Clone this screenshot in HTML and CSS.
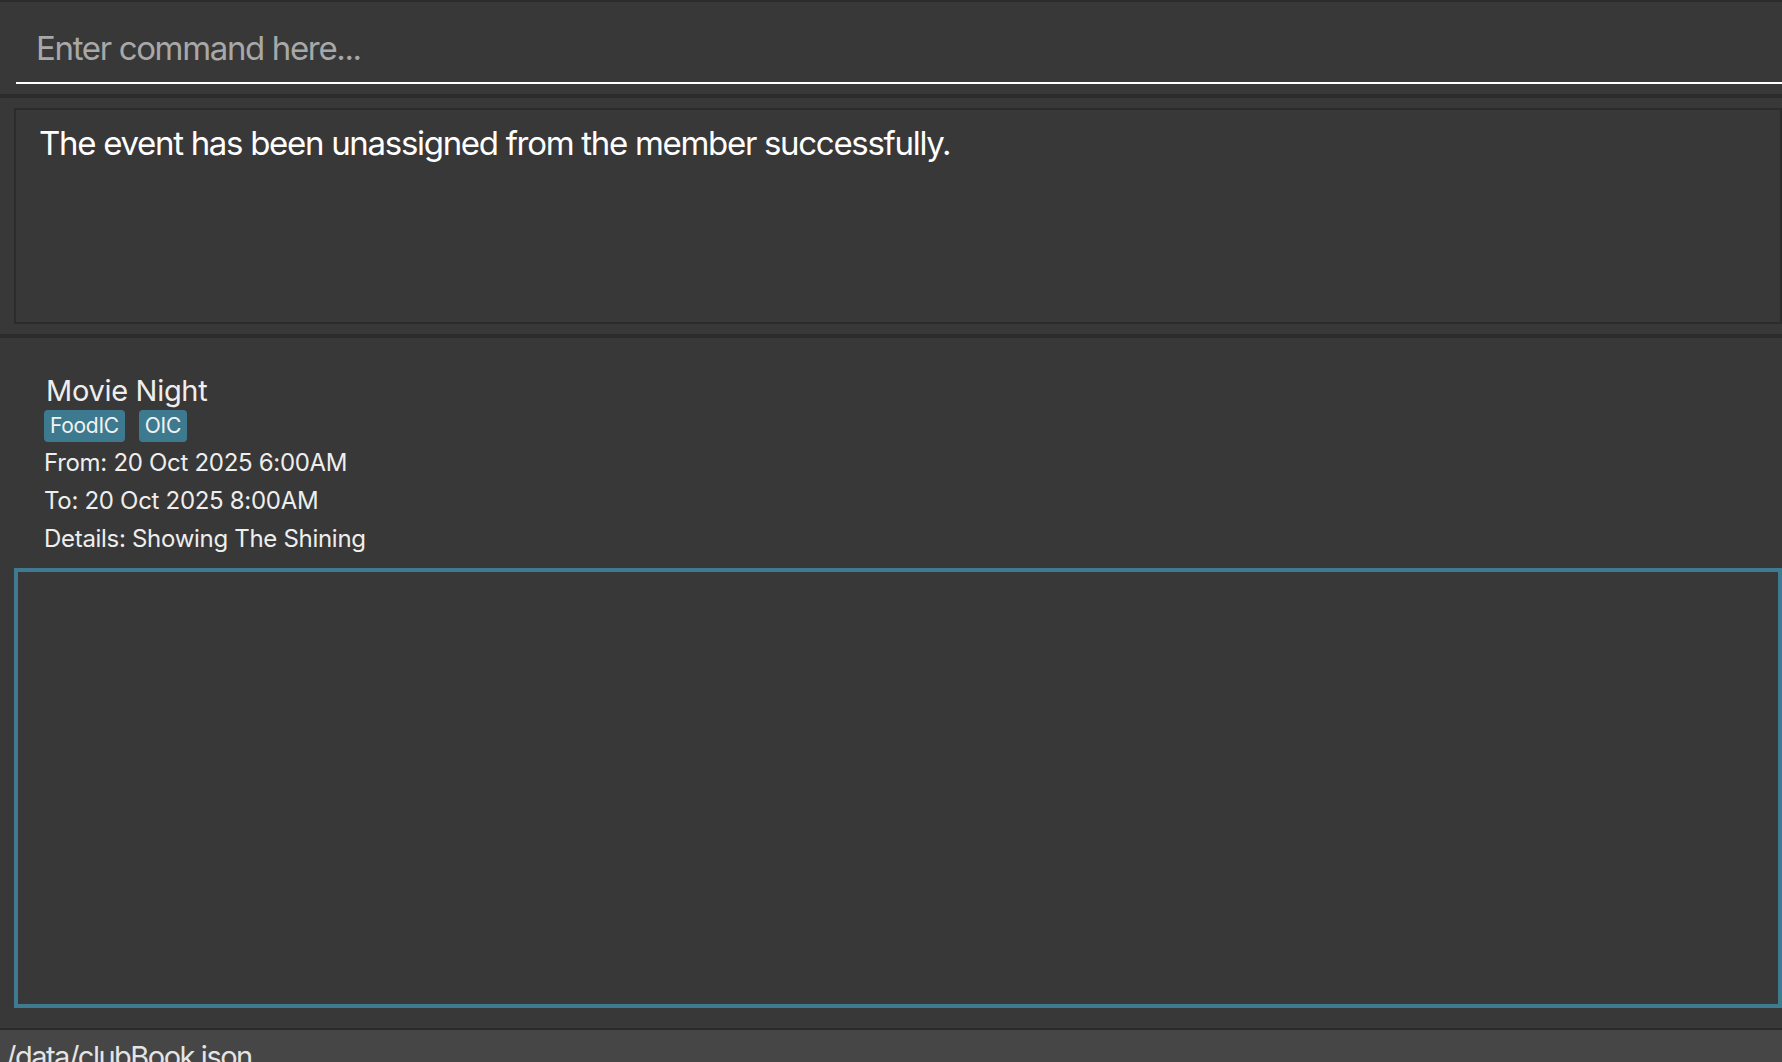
FILE: index.html
```html
<!DOCTYPE html>
<html lang="en">
<head>
<meta charset="utf-8">
<title>ClubBook</title>
<link rel="stylesheet" href="styles.css">
</head>
<body>
<div class="app">
  <div class="command-pane">
    <div class="command-field">
      <span class="placeholder">Enter command here...</span>
    </div>
  </div>
  <div class="divider"></div>
  <div class="result-pane">
    <div class="result-box">
      <p class="result-text">The event has been unassigned from the member successfully.</p>
    </div>
  </div>
  <div class="divider"></div>
  <div class="event-card">
    <div class="event-name">Movie Night</div>
    <div class="tags">
      <span class="tag">FoodIC</span>
      <span class="tag">OIC</span>
    </div>
    <div class="event-line">From: 20 Oct 2025 6:00AM</div>
    <div class="event-line">To: 20 Oct 2025 8:00AM</div>
    <div class="event-line">Details: Showing The Shining</div>
  </div>
  <div class="list-pane">
    <div class="list-box"></div>
  </div>
  <div class="status-bar">/data/clubBook.json</div>
</div>
</body>
</html>
```

FILE: styles.css
```css
html, body {
  margin: 0;
  padding: 0;
  height: 100%;
  overflow: hidden;
  background: #383838;
  font-family: Inter, "Liberation Sans", sans-serif;
}

.app {
  display: flex;
  flex-direction: column;
  height: 1062px;
  border-top: 2px solid #2b2b2b;
  box-sizing: border-box;
  overflow: hidden;
}

.command-pane {
  flex: none;
  height: 92px;
  padding-left: 16px;
  box-sizing: border-box;
}

.command-field {
  height: 80px;
  border-bottom: 2px solid #ffffff;
  padding-left: 20px;
  display: flex;
  align-items: flex-start;
}

.placeholder {
  color: #a8a8a8;
  font-size: 33px;
  letter-spacing: -1.35px;
  line-height: 40px;
  margin-top: 26px;
}

.divider {
  height: 4px;
  background: #2b2b2b;
  flex: none;
}

.result-pane {
  height: 236px;
  padding: 10px 0 10px 14px;
  box-sizing: border-box;
  flex: none;
}

.result-box {
  height: 100%;
  border: 2px solid #2b2b2b;
  box-sizing: border-box;
  padding: 0 23px;
}

.result-text {
  margin: 13px 0 0;
  color: #ffffff;
  font-size: 33px;
  letter-spacing: -1.3px;
  line-height: 40px;
}

.event-card {
  flex: none;
  height: 230px;
  box-sizing: border-box;
  padding: 35px 0 0 44px;
  color: #eeeeee;
}

.event-name {
  font-size: 29px;
  line-height: 36px;
  padding-left: 2px;
  letter-spacing: -0.3px;
}

.tags {
  display: flex;
  gap: 14px;
  margin-top: 1px;
}

.tag {
  background: #3e7a8f;
  color: #f2f2f2;
  font-size: 21px;
  line-height: 32px;
  height: 32px;
  padding: 0 6px;
  border-radius: 4px;
  letter-spacing: -0.3px;
}

.event-line {
  font-size: 24px;
  line-height: 38px;
  letter-spacing: -0.3px;
}

.tags + .event-line {
  margin-top: 2px;
}

.list-pane {
  flex: none;
  height: 460px;
  padding: 0 0 20px 14px;
  box-sizing: border-box;
}

.list-box {
  height: 100%;
  border: 4px solid #3e7b91;
  box-sizing: border-box;
}

.status-bar {
  flex: none;
  height: 34px;
  box-sizing: border-box;
  overflow: hidden;
  border-top: 2px solid #2a2a2a;
  background: #464646;
  color: #e4e4e4;
  font-size: 29px;
  line-height: 36px;
  padding: 9px 0 0 6px;
  letter-spacing: -1.5px;
  white-space: nowrap;
}
```
